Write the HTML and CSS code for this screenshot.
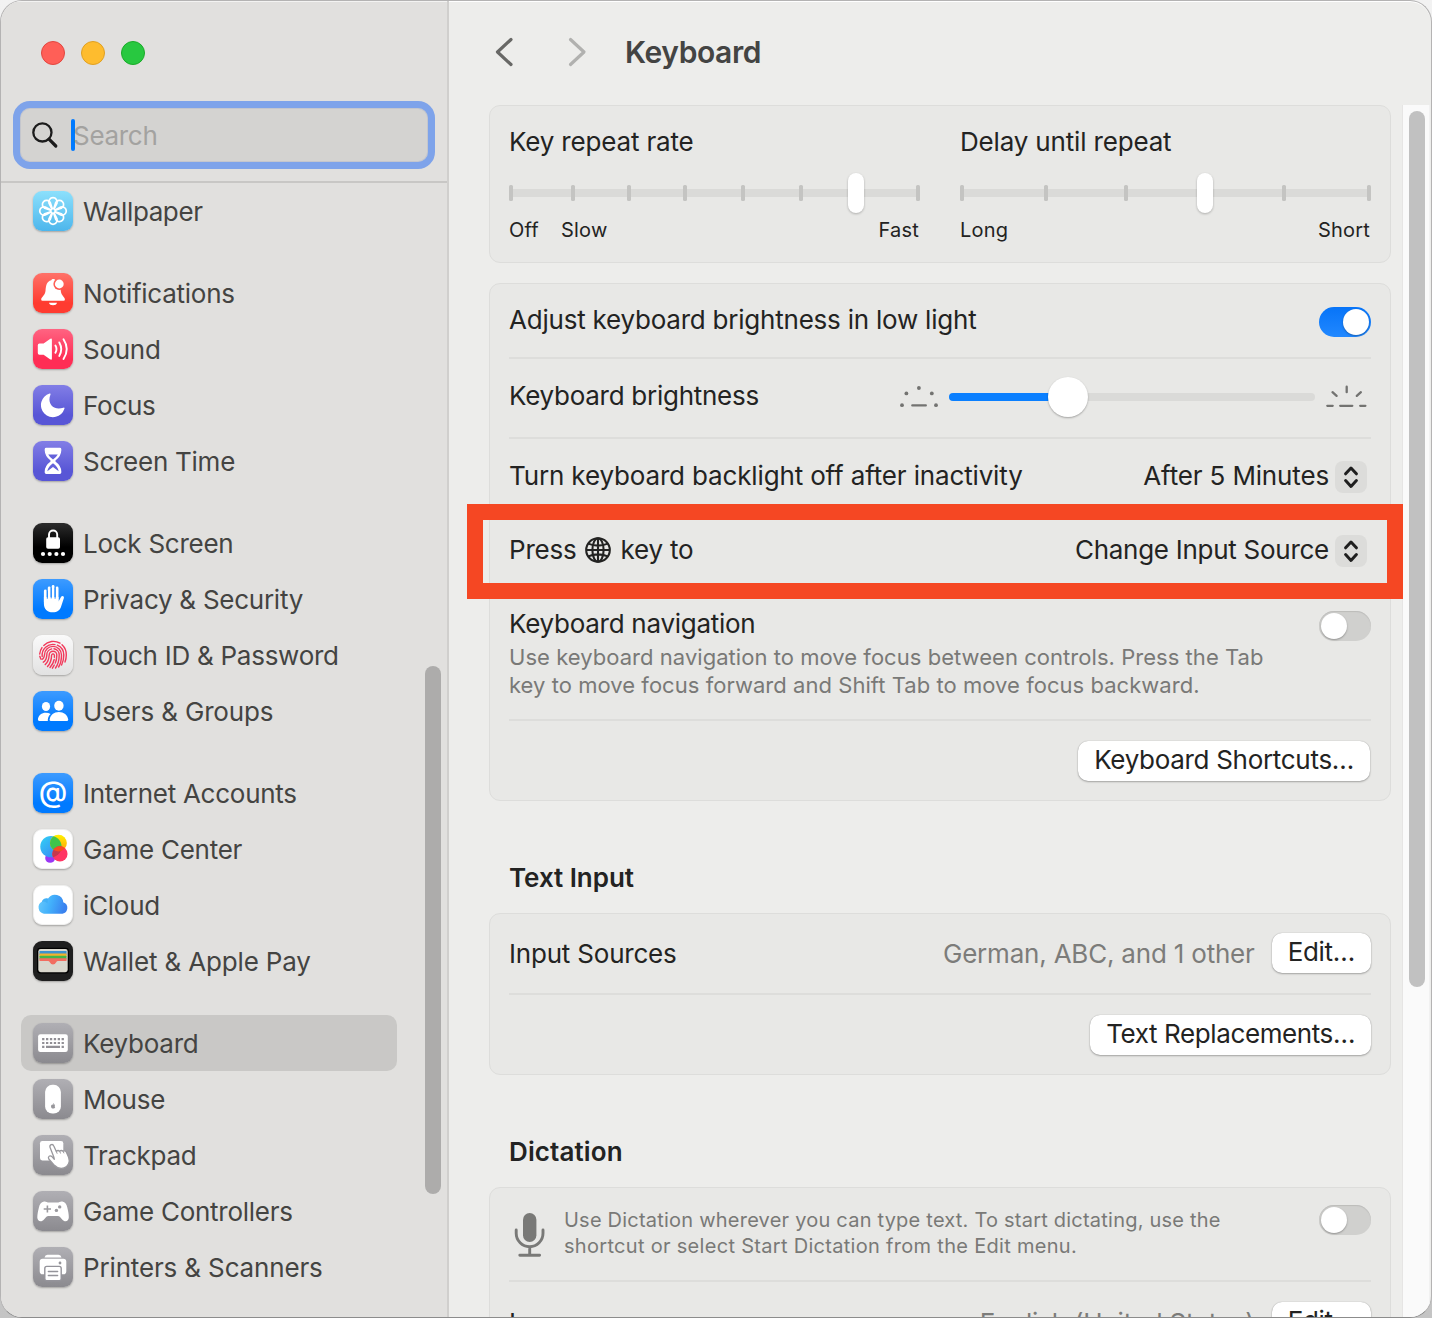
FILE: index.html
```html
<!DOCTYPE html>
<html lang="en">
<head>
<meta charset="utf-8">
<title>Keyboard</title>
<link rel="stylesheet" href="styles.css">
</head>
<body>
<div class="window">
  <aside class="sidebar">
    <div class="lights"><i class="light red"></i><i class="light yellow"></i><i class="light green"></i></div>
    <div class="search">
      <svg class="search-icon" width="28" height="28" viewBox="0 0 28 28"><circle cx="10.4" cy="11.4" r="9.1" /><path d="M17 18.2 L23.8 25" class="handle"/></svg>
      <span class="caret"></span><span class="placeholder">Search</span>
    </div>
    <nav class="list">
      <div class="group">
        <div class="item"><svg class="icon sky" viewBox="0 0 40 40"><defs><path id="petal" d="M20 20 L16 12.2 A4.2 4.2 0 1 1 24 12.2 Z"/></defs><g fill="none" stroke="#fff" stroke-width="1.7" stroke-linejoin="round"><use href="#petal"/><use href="#petal" transform="rotate(45 20 20)"/><use href="#petal" transform="rotate(90 20 20)"/><use href="#petal" transform="rotate(135 20 20)"/><use href="#petal" transform="rotate(180 20 20)"/><use href="#petal" transform="rotate(225 20 20)"/><use href="#petal" transform="rotate(270 20 20)"/><use href="#petal" transform="rotate(315 20 20)"/></g><circle cx="20" cy="20" r="1.4" fill="#6ccbf4"/></svg><span class="tight">Wallpaper</span></div>
      </div>
      <div class="group">
        <div class="item"><svg class="icon coral" viewBox="0 0 40 40"><mask id="bellcut"><rect width="40" height="40" fill="#fff"/><circle cx="26.3" cy="11" r="5.9" fill="#000"/></mask><path mask="url(#bellcut)" fill="#fff" d="M8.2 26.4C8.2 24 12 22.6 12.5 18 C12.9 12.5 13.6 8.6 18.3 7.3 C18.7 5.6 21.9 5.6 22.3 7.3 C26.6 8.6 27.5 13 27.8 18 C28.2 22.6 31.9 24 31.9 26.4 Q31.9 27.7 30.6 27.7 H9.5 Q8.2 27.7 8.2 26.4Z"/><circle cx="26.3" cy="11" r="4.4" fill="#fff"/><path fill="#fff" d="M15.9 29.8 H24.1 A4.2 3.2 0 0 1 15.9 29.8Z"/></svg><span>Notifications</span></div>
        <div class="item"><svg class="icon pink" viewBox="0 0 40 40"><path fill="#fff" d="M6.4 14.6 H10.6 L17 9.9 Q18.9 8.9 18.9 10.8 V29.5 Q18.9 31.4 17 30.3 L10.6 25.7 H6.4 Q4.8 25.7 4.8 24.1 V16.2 Q4.8 14.6 6.4 14.6Z"/><path fill="none" stroke="#fff" stroke-width="1.9" stroke-linecap="round" d="M22.4 16.5 Q24.6 20.1 22.4 23.8 M26.3 13.4 Q30.2 20.1 26.3 26.9 M30.5 10.3 Q37 20.1 30.5 30"/></svg><span>Sound</span></div>
        <div class="item"><svg class="icon indigo" viewBox="0 0 40 40"><path fill="#fff" d="M16.6 8.6 Q18 8.2 17.4 9.8 C13.8 18.5 20.5 26 30.3 22.7 Q32 22.2 31.4 23.7 A12 12 0 1 1 16.6 8.6Z"/></svg><span>Focus</span></div>
        <div class="item"><svg class="icon indigo" viewBox="0 0 40 40"><path fill="#fff" d="M13.2 6.8 H26.8 Q28.3 6.8 28.3 8.2 V9.6 Q28 15.5 22.7 19.3 Q22 20 22.7 20.7 Q28 24.5 28.3 30.3 V31.6 Q28.3 33 26.8 33 H13.2 Q11.7 33 11.7 31.6 V30.3 Q12 24.5 17.3 20.7 Q18 20 17.3 19.3 Q12 15.5 11.7 9.6 V8.2 Q11.7 6.8 13.2 6.8Z"/><path class="cut-indigo" d="M15.2 13.6 H24.8 Q23.3 16.4 20 18.5 Q16.7 16.4 15.2 13.6Z M20 22.2 C16.8 24.8 14.8 26.8 14.3 30.3 L20 25.9 L25.7 30.3 C25.2 26.8 23.2 24.8 20 22.2Z"/></svg><span>Screen Time</span></div>
      </div>
      <div class="group">
        <div class="item"><svg class="icon black" viewBox="0 0 40 40"><rect x="13.2" y="14.2" width="13.8" height="11.5" rx="1.8" fill="#fff"/><path d="M16 15.5 V11.6 A4.1 4.1 0 0 1 24.2 11.6 V15.5" fill="none" stroke="#fff" stroke-width="1.9"/><g fill="#fff"><circle cx="10" cy="31" r="2.1"/><circle cx="16.7" cy="31" r="2.1"/><circle cx="23.4" cy="31" r="2.1"/><circle cx="30" cy="31" r="2.1"/></g></svg><span>Lock Screen</span></div>
        <div class="item"><svg class="icon blue" viewBox="0 0 40 40"><g stroke="#fff" stroke-width="2.8" stroke-linecap="round" fill="none"><path d="M12.3 12 V23 M16.2 8.8 V22 M20.1 7.5 V22 M24.1 9 V22"/></g><path fill="#fff" d="M10.9 18 H25.5 V22.5 L28 18 C28.8 16.4 31.3 16.8 30.9 19 L28.2 27.3 C27 31.4 24.2 33.3 19.8 33.3 C14.2 33.3 10.9 29.8 10.9 24.4Z"/><path class="cut-blue" d="M14.3 12 V19.3 M18.2 9 V19 M22.1 9 V19.3"/></svg><span>Privacy &amp; Security</span></div>
        <div class="item"><svg class="icon white-grad" viewBox="0 0 40 40"><g fill="none" stroke="#f2395b" stroke-width="1.4" stroke-linecap="round"><path d="M10.8 10.5 A13.3 13.3 0 0 1 27 8.2"/><path d="M29 9.7 A13.4 13.4 0 0 1 33.3 20 Q33.3 23.5 32 27"/><path d="M9 12.6 A13.3 13.3 0 0 0 6.7 19 M6.8 21.3 L7.8 24"/><path d="M9.2 21.5 A10.9 10.9 0 0 1 22 9.6"/><path d="M24.3 10.2 A10.8 10.8 0 0 1 30.8 20 Q30.8 25.5 28.6 30"/><path d="M9 24.3 Q10.8 24 11.5 19.8 A8.5 8.5 0 0 1 28.5 20 Q28.5 27.5 25.6 32"/><path d="M10.3 27.2 Q13.2 25.6 13.8 20.3 A6.2 6.2 0 0 1 18.7 13.9"/><path d="M21 13.8 A6.2 6.2 0 0 1 26.2 20 Q26.2 28 22.5 33"/><path d="M12.2 29.6 Q15.8 26.6 16.2 20 A3.8 3.8 0 0 1 23.8 20 Q23.8 25 22.3 28"/><path d="M21.3 30 L19.4 33.2 M14.5 31.6 Q18.5 27.3 18.6 20 Q20 17.7 21.4 20 V22.2 M21.2 24.5 Q20.4 28.7 17 32.5"/></g></svg><span>Touch ID &amp; Password</span></div>
        <div class="item"><svg class="icon blue" viewBox="0 0 40 40"><g fill="#fff"><ellipse cx="13" cy="15.5" rx="4.1" ry="4.5"/><path d="M6.2 30 Q4.9 30 4.9 28.6 C5.3 24.3 8.6 21.7 12.8 21.7 Q15.5 21.7 17.6 23 C15.4 25 14.7 27.3 14.8 30Z"/><ellipse cx="25.9" cy="14.8" rx="4.7" ry="5"/><path d="M18 30 Q16.5 30 16.6 28.5 C17.2 23.8 21 20.9 25.9 20.9 C30.8 20.9 34.6 23.8 35.2 28.5 Q35.3 30 33.8 30Z"/></g></svg><span class="wide">Users &amp; Groups</span></div>
      </div>
      <div class="group">
        <div class="item"><svg class="icon blue" viewBox="0 0 40 40"><text x="20" y="28.6" text-anchor="middle" class="at">@</text></svg><span>Internet Accounts</span></div>
        <div class="item"><svg class="icon white" viewBox="0 0 40 40"><defs><linearGradient id="gb" x1="0" y1="0" x2="1" y2="1"><stop offset="0" stop-color="#32d3f5"/><stop offset="1" stop-color="#3a7cf4"/></linearGradient><linearGradient id="gy" x1="0" y1="0" x2="0" y2="1"><stop offset="0" stop-color="#fff200"/><stop offset="1" stop-color="#ff9d0a"/></linearGradient><clipPath id="gc"><circle cx="17.8" cy="17.5" r="11.2"/></clipPath><clipPath id="gd"><circle cx="25.7" cy="13.8" r="8.9"/></clipPath></defs><circle cx="17" cy="29.4" r="5.2" fill="#9a37f5"/><circle cx="17.8" cy="17.5" r="11.2" fill="url(#gb)"/><circle cx="25.7" cy="13.8" r="8.9" fill="url(#gy)"/><circle cx="25.7" cy="13.8" r="8.9" fill="#3fc44b" clip-path="url(#gc)"/><circle cx="27.3" cy="25.2" r="8" fill="#ff3564"/><circle cx="27.3" cy="25.2" r="8" fill="#c5384e" clip-path="url(#gc)"/><circle cx="27.3" cy="25.2" r="8" fill="#f84c20" clip-path="url(#gd)"/></svg><span>Game Center</span></div>
        <div class="item"><svg class="icon white" viewBox="0 0 40 40"><defs><linearGradient id="ic" x1="0" y1="0" x2="1" y2="0.2"><stop offset="0" stop-color="#6acbfb"/><stop offset=".5" stop-color="#42b0fb"/><stop offset="1" stop-color="#3a82ef"/></linearGradient></defs><path fill="url(#ic)" d="M10.5 29.2 A6.8 6.8 0 0 1 8.2 16.6 A5 5 0 0 1 14.8 13.2 A8.7 8.7 0 0 1 30.8 17.2 A6.2 6.2 0 0 1 30 29.2Z"/><path d="M8.3 16.8 Q11.2 15.3 14.2 18.3 L14.7 13.3 A5 5 0 0 0 8.3 16.8" fill="#38a7f3" opacity=".55"/></svg><span>iCloud</span></div>
        <div class="item"><svg class="icon wallet" viewBox="0 0 40 40"><rect x="4" y="6.8" width="32" height="25.6" rx="3.4" fill="#000"/><rect x="5.3" y="8" width="29.4" height="23.2" rx="2.4" fill="#d9d7cd"/><path fill="#3b93cf" d="M6.5 10 H33.5 V14 H6.5Z"/><path fill="#f5b22b" d="M6.5 12.4 H33.5 V16 H6.5Z"/><path fill="#44b649" d="M6.5 14.8 H33.5 V18.5 H6.5Z"/><path fill="#f26d5f" d="M6.5 17.2 H33.5 V20 H25 Q23.8 20 23.2 21.2 Q22 23.4 20 23.4 Q18 23.4 16.8 21.2 Q16.2 20 15 20 H6.5Z"/></svg><span class="wide">Wallet &amp; Apple Pay</span></div>
      </div>
      <div class="group">
        <div class="item selected"><svg class="icon gray" viewBox="0 0 40 40"><rect x="5.1" y="11.2" width="29.7" height="17.9" rx="2.4" fill="#fff"/><g stroke="#918f95" stroke-width="2.2" fill="none"><path stroke-dasharray="2.3 1.6" d="M9.1 16.2 H31"/><path stroke-dasharray="2.3 1.6" d="M9.1 20 H31"/><path d="M9.1 23.9 H11.4 M13 23.9 H27 M28.6 23.9 H30.9"/></g></svg><span>Keyboard</span></div>
        <div class="item"><svg class="icon gray" viewBox="0 0 40 40"><rect x="12.1" y="5.8" width="15.8" height="28.8" rx="7.2" fill="#fff"/><path fill="#97969b" d="M20 25.6 Q21.4 24.8 22 26 Q21.2 27.3 22.2 28.3 Q21.2 30 20 29.4 Q18.4 30 18 27.8 Q17.8 25.4 20 25.6Z M20 25.2 Q20 24 21 23.9 Q21 25 20 25.2Z"/></svg><span>Mouse</span></div>
        <div class="item"><svg class="icon gray" viewBox="0 0 40 40"><rect x="7" y="6" width="23.3" height="19.4" rx="2.3" fill="#fff"/><path fill="#fff" stroke="#99989d" stroke-width="1.3" stroke-linejoin="round" d="M20.8 21.9 L17 12.3 C16.3 9.5 19.7 8.4 20.8 11 L23.2 16.3 Q25.2 14.8 26.6 16.2 Q28.5 14.8 30.1 16.2 Q32.4 15.2 33.4 17.2 L35.6 22.2 C37.4 27 35.2 31.5 31 32.9 C27 34.2 23.6 32.6 20.8 29.7 L16 24.3 C14.3 21.8 16.7 20 18.7 21.4 L21.3 24.2Z"/><path fill="none" stroke="#99989d" stroke-width="1" d="M23.2 16.2 L24.2 18.7 M26.6 16.2 L27.6 18.5 M30 16.2 L31 18.3"/></svg><span>Trackpad</span></div>
        <div class="item"><svg class="icon gray" viewBox="0 0 40 40"><path fill="#fff" d="M11 10.6 Q12.2 10.3 13.6 10.9 Q14.8 11.4 16.2 11.4 H24.2 Q25.4 11.4 26.5 10.9 Q28 10.3 29.3 10.6 C32.3 11.2 33.6 13.6 34.3 16.5 C35.2 20 35.9 23.6 35.8 26.5 C35.7 30.5 31.6 31.4 29.2 28.4 L26.8 25.7 Q26 25 25 25 H15.3 Q14.2 25 13.4 25.7 L11 28.4 C8.6 31.4 4.4 30.5 4.3 26.5 C4.3 23.6 5 20 5.9 16.5 C6.6 13.6 8 11.2 11 10.6Z"/><path d="M10.7 18 H18 M14.4 14.4 V21.6" stroke="#9b9a9f" stroke-width="1.6"/><circle cx="26.7" cy="15.9" r="1.7" fill="#9b9a9f"/><circle cx="23.4" cy="19.4" r="1.7" fill="#9b9a9f"/></svg><span>Game Controllers</span></div>
        <div class="item"><svg class="icon gray" viewBox="0 0 40 40"><path fill="#fff" d="M11.5 10.4 Q12 7.8 14.5 7.8 H25.5 Q28 7.8 28.5 10.4Z M9.7 11.8 H30.3 Q33.3 11.8 33.3 14.8 V24.2 Q33.3 27.3 30.3 27.3 H9.7 Q6.7 27.3 6.7 24.2 V14.8 Q6.7 11.8 9.7 11.8Z"/><circle cx="27" cy="16" r="1.4" fill="#97969b"/><rect x="11.8" y="19.4" width="16.4" height="14.3" rx="2" fill="#fff" stroke="#94939a" stroke-width="1.4"/><path d="M15.4 24.4 H24.6 M15.4 28.4 H24.6" stroke="#94939a" stroke-width="1.5" stroke-linecap="round"/></svg><span class="wide">Printers &amp; Scanners</span></div>
      </div>
    </nav>
    <div class="side-thumb"></div>
  </aside>

  <main class="pane">
    <header class="titlebar">
      <svg width="96" height="30" viewBox="0 0 96 30" class="arrows"><path d="M17 2.5 L3.5 15 L17 27.5" stroke="#686866"/><path d="M76.5 2.5 L90 15 L76.5 27.5" stroke="#b1b1af"/></svg>
      <h1>Keyboard</h1>
    </header>
    <div class="body">
      <div class="content">
        <section class="card repeat">
          <div class="range">
            <div class="range-label">Key repeat rate</div>
            <svg width="411" height="48" viewBox="0 0 411 48" class="ticks"><rect class="rail" x="2" y="20" width="407" height="8"/><g class="tick"><rect x="0" y="16" width="4" height="16" rx="1.5"/><rect x="62" y="16" width="4" height="16" rx="1.5"/><rect x="118" y="16" width="4" height="16" rx="1.5"/><rect x="174" y="16" width="4" height="16" rx="1.5"/><rect x="232" y="16" width="4" height="16" rx="1.5"/><rect x="290" y="16" width="4" height="16" rx="1.5"/><rect x="407" y="16" width="4" height="16" rx="1.5"/></g><rect class="knob" x="339" y="4" width="16" height="40" rx="8"/></svg>
            <div class="ends"><span class="off">Off</span><span>Slow</span><span class="last">Fast</span></div>
          </div>
          <div class="range">
            <div class="range-label">Delay until repeat</div>
            <svg width="411" height="48" viewBox="0 0 411 48" class="ticks"><rect class="rail" x="2" y="20" width="407" height="8"/><g class="tick"><rect x="0" y="16" width="4" height="16" rx="1.5"/><rect x="84" y="16" width="4" height="16" rx="1.5"/><rect x="164" y="16" width="4" height="16" rx="1.5"/><rect x="322" y="16" width="4" height="16" rx="1.5"/><rect x="407" y="16" width="4" height="16" rx="1.5"/></g><rect class="knob" x="237" y="4" width="16" height="40" rx="8"/></svg>
            <div class="ends"><span>Long</span><span class="last">Short</span></div>
          </div>
        </section>

        <section class="card keys">
          <div class="row r-auto"><span class="label">Adjust keyboard brightness in low light</span><span class="toggle on"></span></div>
          <div class="row r-bright"><span class="label tight">Keyboard brightness</span>
            <div class="bright">
              <svg width="42" height="30" viewBox="0 0 42 30" class="glow"><g class="dots"><circle cx="5" cy="25.2" r="1.9"/><circle cx="9.4" cy="13.4" r="1.9"/><circle cx="21.9" cy="8" r="1.9"/><circle cx="34.8" cy="13.4" r="1.9"/><circle cx="39" cy="25.2" r="1.9"/></g><path d="M15.3 25.4 H28.8"/></svg>
              <div class="slider"><div class="fill"></div><div class="thumb"></div></div>
              <svg width="46" height="30" viewBox="0 0 46 30" class="glow"><path d="M4.3 25.8 H9.7 M17.2 25.8 H29.3 M37.2 25.8 H42.4 M23.7 6.7 V12.2 M9.5 12.2 L13.6 15.9 M37.9 12.2 L33.8 15.9"/></svg>
            </div>
          </div>
          <div class="row r-pop"><span class="label loose">Turn keyboard backlight off after inactivity</span><span class="popup loose">After 5 Minutes<svg class="step" viewBox="0 0 32 32"><path d="M10.6 12.8 L16 7 L21.4 12.8 M10.6 19.6 L16 25.4 L21.4 19.6"/></svg></span></div>
          <div class="row r-pop r-globe"><span class="globe-label">Press <svg class="globe" width="26" height="26" viewBox="0 0 26 26"><circle cx="13" cy="13" r="11.8"/><ellipse cx="13" cy="13" rx="5.6" ry="11.8"/><path d="M13 1 V25 M1 13 H25 M3.2 6.6 Q13 10.6 22.8 6.6 M3.2 19.4 Q13 15.4 22.8 19.4"/></svg> key to</span><span class="popup tight">Change Input Source<svg class="step" viewBox="0 0 32 32"><path d="M10.6 12.8 L16 7 L21.4 12.8 M10.6 19.6 L16 25.4 L21.4 19.6"/></svg></span>
            <div class="highlight"></div></div>
          <div class="row r-nav"><div><div class="label tight">Keyboard navigation</div><p class="note">Use keyboard navigation to move focus between controls. Press the Tab<br>key to move focus forward and Shift Tab to move focus backward.</p></div><span class="toggle"></span></div>
          <div class="row r-short"><button class="btn">Keyboard Shortcuts…</button></div>
        </section>

        <h2>Text Input</h2>
        <section class="card input">
          <div class="row r-src"><span class="label">Input Sources</span><span class="value">German, ABC, and 1 other</span><button class="btn">Edit…</button></div>
          <div class="row r-repl"><button class="btn narrow">Text Replacements…</button></div>
        </section>

        <h2 class="spread">Dictation</h2>
        <section class="card dict">
          <div class="row r-dict">
            <svg class="mic" width="32" height="46" viewBox="0 0 32 46"><rect x="9" y="1" width="13.4" height="29" rx="6.7"/><path d="M2.2 18 V21.3 A13.4 13.4 0 0 0 29 21.3 V18 M15.7 35 V43 M5.8 43.2 H25.6"/></svg>
            <p class="note small">Use Dictation wherever you can type text. To start dictating, use the<br><span class="second">shortcut or select Start Dictation from the Edit menu.</span></p>
            <span class="toggle"></span>
          </div>
          <div class="row r-lang"><span class="label">Languages</span><span class="value">English (United States)</span><button class="btn">Edit…</button></div>
        </section>
      </div>
      <div class="scroll-track"><div class="scroll-thumb"></div></div>
    </div>
  </main>
</div>
</body>
</html>
```
FILE: styles.css
```css
* { box-sizing: border-box; }
html, body { margin: 0; height: 100%; }
body {
  width: 1432px;
  height: 1318px;
  overflow: hidden;
  background: linear-gradient(#f2f2f2, #c4c4c4);
  font: 26px/32px Inter, "Liberation Sans", sans-serif;
  letter-spacing: -0.2px;
  color: #232322;
}
h1, h2, p { margin: 0; }
svg { display: block; flex: none; }

.window {
  display: flex;
  width: 1432px;
  height: 1318px;
  border: 1px solid #b4b3b3;
  border-bottom-color: #8c8c8c;
  border-radius: 22px;
  overflow: hidden;
  background: #ededeb;
  box-shadow: inset 0 1px 0 #fff;
}

/* Sidebar */
.sidebar {
  position: relative;
  flex: none;
  width: 448px;
  background: #e1e0de;
  border-right: 2px solid #d0cfcd;
  box-shadow: inset 0 1px 0 #f3f3f2;
}
.lights { display: flex; gap: 16px; padding: 40px 0 0 40px; }
.light { width: 24px; height: 24px; border-radius: 50%; border: 1px solid; }
.red { background: #ff5f57; border-color: #e2463f; }
.yellow { background: #febc2e; border-color: #e0a022; }
.green { background: #28c840; border-color: #1aab29; }

.search {
  display: flex;
  align-items: center;
  width: 422px;
  height: 68px;
  margin: 36px 0 12px 12px;
  border: 7px solid #7ea3ea;
  border-radius: 17px;
  padding-left: 12px;
  background: #d4d3d1;
  box-shadow: inset 0 0 0 1px #c4c6cd;
}
.search-icon { fill: none; stroke: #1c1c1c; stroke-width: 2.3; }
.handle { stroke-width: 3.2; stroke-linecap: round; }
.caret { width: 4px; height: 32px; margin-left: 11px; border-radius: 2px; background: #007aff; }
.placeholder { margin-left: -2px; padding-top: 2px; color: #a3a2a0; letter-spacing: -0.3px; }

.list { border-top: 2px solid #c8c7c5; color: #444442; letter-spacing: -0.26px; }
.group + .group { margin-top: 26px; }
.item {
  display: flex;
  align-items: center;
  gap: 10px;
  width: 376px;
  height: 56px;
  margin-left: 20px;
  padding-left: 12px;
  border-radius: 10px;
}
.item span { padding-top: 1px; }
.item .tight { letter-spacing: -0.4px; }
.item .wide { letter-spacing: -0.15px; }
.selected { background: #c9c8c6; }
.icon {
  width: 40px;
  height: 40px;
  border-radius: 9px;
  box-shadow: 0 1px 2px rgba(0, 0, 0, .28);
}
.sky { background: linear-gradient(#8ce0fc, #4db6ec); }
.coral { background: linear-gradient(#ff7269, #ff3b30 75%); }
.pink { background: linear-gradient(#ff6482, #ff2d55 75%); }
.indigo { background: linear-gradient(#827ee6, #5856d6 75%); }
.black { background: linear-gradient(#2c2c2c, #000 60%); }
.blue { background: linear-gradient(#3d9bff, #007aff 75%); }
.white-grad { background: linear-gradient(#fafafa, #e2e2e2); }
.white { background: #fff; border: 1px solid #f0f0ef; }
.wallet { background: #1f1f1f; }
.gray { background: linear-gradient(#b0afb4, #8b8a8f); }
.cut-indigo { fill: #6462da; }
.cut-blue { stroke: #2089fe; stroke-width: 1; fill: none; stroke-linecap: round; }
.at { font: 500 29px Inter, sans-serif; letter-spacing: 0; fill: #fff; }
.side-thumb {
  position: absolute;
  left: 424px;
  top: 665px;
  width: 16px;
  height: 528px;
  border-radius: 8px;
  background: #adacab;
}

/* Main pane */
.pane { flex: 1; display: flex; flex-direction: column; min-width: 0; }
.titlebar { flex: none; display: flex; height: 104px; padding: 36px 0 0 45px; }
.arrows { fill: none; stroke-width: 3.2; stroke-linecap: round; stroke-linejoin: round; }
h1 { margin-left: 35px; font-size: 30px; line-height: 30px; font-weight: 600; letter-spacing: -0.4px; color: #444443; }
.body { flex: 1; display: flex; min-height: 0; }
.content { width: 902px; margin-left: 40px; flex: none; }
.scroll-track {
  flex: none;
  width: 28px;
  margin-left: 11px;
  padding: 6px 0 0 6px;
  background: #fafafa;
  border-left: 1px solid #e6e5e4;
  border-right: 1px solid #f1f1f1;
}
.scroll-thumb { width: 16px; height: 876px; border-radius: 8px; background: #c1c1c1; }

.card {
  padding: 0 19px;
  background: #e8e8e6;
  border: 1px solid #dddddb;
  border-radius: 11px;
}
.repeat { display: flex; gap: 40px; height: 158px; padding-top: 20px; }
.range { width: 411px; }
.range-label { height: 33px; letter-spacing: -0.17px; }
.label { padding-top: 1px; }
.ticks { margin-top: 10px; }
.rail { fill: #dadad8; }
.tick { fill: #c4c4c2; }
.knob { fill: #fff; filter: drop-shadow(0 1px 1px rgba(0, 0, 0, .25)); }
.ends { display: flex; font-size: 20px; line-height: 24px; letter-spacing: .2px; margin-top: 1px; }
.off { width: 52px; }
.last { margin: 0 1px 0 auto; }

.keys { height: 518px; margin-top: 20px; }
.row { position: relative; display: flex; justify-content: space-between; }
.row + .row { border-top: 2px solid #dddddb; }
.row .tight { letter-spacing: -0.27px; }
.row .loose { letter-spacing: -0.15px; }
.r-auto { height: 73px; padding-top: 19px; letter-spacing: -0.22px; }
.toggle {
  flex: none;
  width: 52px;
  height: 30px;
  padding: 2px;
  border-radius: 15px;
  background: #d0d0ce;
  box-shadow: inset 0 1px 1px #bcbcba;
}
.toggle::before {
  content: "";
  display: block;
  width: 26px;
  height: 26px;
  border-radius: 50%;
  background: #fff;
  box-shadow: 0 1px 2px rgba(0, 0, 0, .3);
}
.toggle.on { background: linear-gradient(#0774f8, #2188ff); box-shadow: none; }
.toggle.on::before { margin-left: 22px; }
.r-auto .toggle { margin-top: 4px; }

.r-bright { height: 80px; padding-top: 20px; }
.bright { display: flex; width: 474px; padding-top: 1px; }
.glow { fill: none; stroke: #737371; stroke-width: 2.3; stroke-linecap: round; }
.dots { fill: #737371; stroke: none; }
.slider {
  position: relative;
  width: 366px;
  height: 8px;
  margin: 13px 9px 0 10px;
  border-radius: 4px;
  background: #dadad8;
}
.fill { width: 118px; height: 8px; border-radius: 4px; background: #0a7fff; }
.thumb {
  position: absolute;
  left: 99px;
  top: -16px;
  width: 40px;
  height: 40px;
  border-radius: 50%;
  background: #fff;
  box-shadow: 0 1px 2px rgba(0, 0, 0, .3);
}
.bright .glow:last-child { margin-left: -1px; }

.r-pop { height: 74px; padding-top: 20px; }
.popup { display: flex; align-items: center; gap: 6px; height: 34px; margin-right: 4px; }
.step { width: 32px; height: 32px; margin-top: 2px; border-radius: 8px; background: #dcdcda; fill: none; stroke: #1f1f1f; stroke-width: 3; stroke-linecap: round; stroke-linejoin: round; }
.r-globe { z-index: 1; }
.globe-label { display: flex; align-items: center; gap: 9px; height: 33px; }
.globe { margin: 0 1px 0 -1px; fill: none; stroke: #232322; stroke-width: 2.1; }
.highlight {
  position: absolute;
  left: -42px;
  top: -9px;
  width: 936px;
  height: 95px;
  border: 16px solid #f54723;
}
.r-nav { height: 134px; padding-top: 20px; }
.r-nav .toggle { margin-top: 4px; }
.note { color: #797977; font-size: 22px; line-height: 28px; letter-spacing: .04px; }
.r-nav .note { padding-top: 3px; }
.r-short { justify-content: flex-end; height: 80px; padding: 20px 1px 0 0; }
.btn {
  flex: none;
  height: 40px;
  margin: 0;
  border: 0;
  padding: 0 16px 2px;
  border-radius: 10px;
  background: #fff;
  box-shadow: 0 1px 2px rgba(0, 0, 0, .28), 0 0 1px rgba(0, 0, 0, .3);
  font: 26px/38px Inter, "Liberation Sans", sans-serif;
  letter-spacing: -0.3px;
  color: #232322;
}
.narrow { letter-spacing: -0.4px; }
h2 { padding: 60px 0 18px 20px; height: 112px; font-size: 26px; line-height: 34px; font-weight: 600; letter-spacing: -0.04px; }
.spread { letter-spacing: .12px; }
.input { height: 162px; }
.value { margin-left: auto; margin-right: 17px; color: #7c7c7a; }
.r-src { height: 79px; padding-top: 19px; }
.r-src .label, .r-src .value { padding-top: 5px; }
.r-repl { justify-content: flex-end; padding-top: 20px; }
.dict { height: 240px; }
.r-dict { height: 92px; padding-top: 17px; justify-content: flex-start; }
.mic { margin: 7px 18px 0 5px; fill: #797977; }
.mic path { fill: none; stroke: #797977; stroke-width: 2.9; stroke-linecap: round; }
.small { padding-top: 2px; font-size: 20px; line-height: 26px; letter-spacing: .22px; }
.second { letter-spacing: .3px; }
.r-dict .toggle { margin-left: auto; }
.r-lang { padding-top: 20px; }
.r-lang .label, .r-lang .value { padding-top: 5px; }
```
